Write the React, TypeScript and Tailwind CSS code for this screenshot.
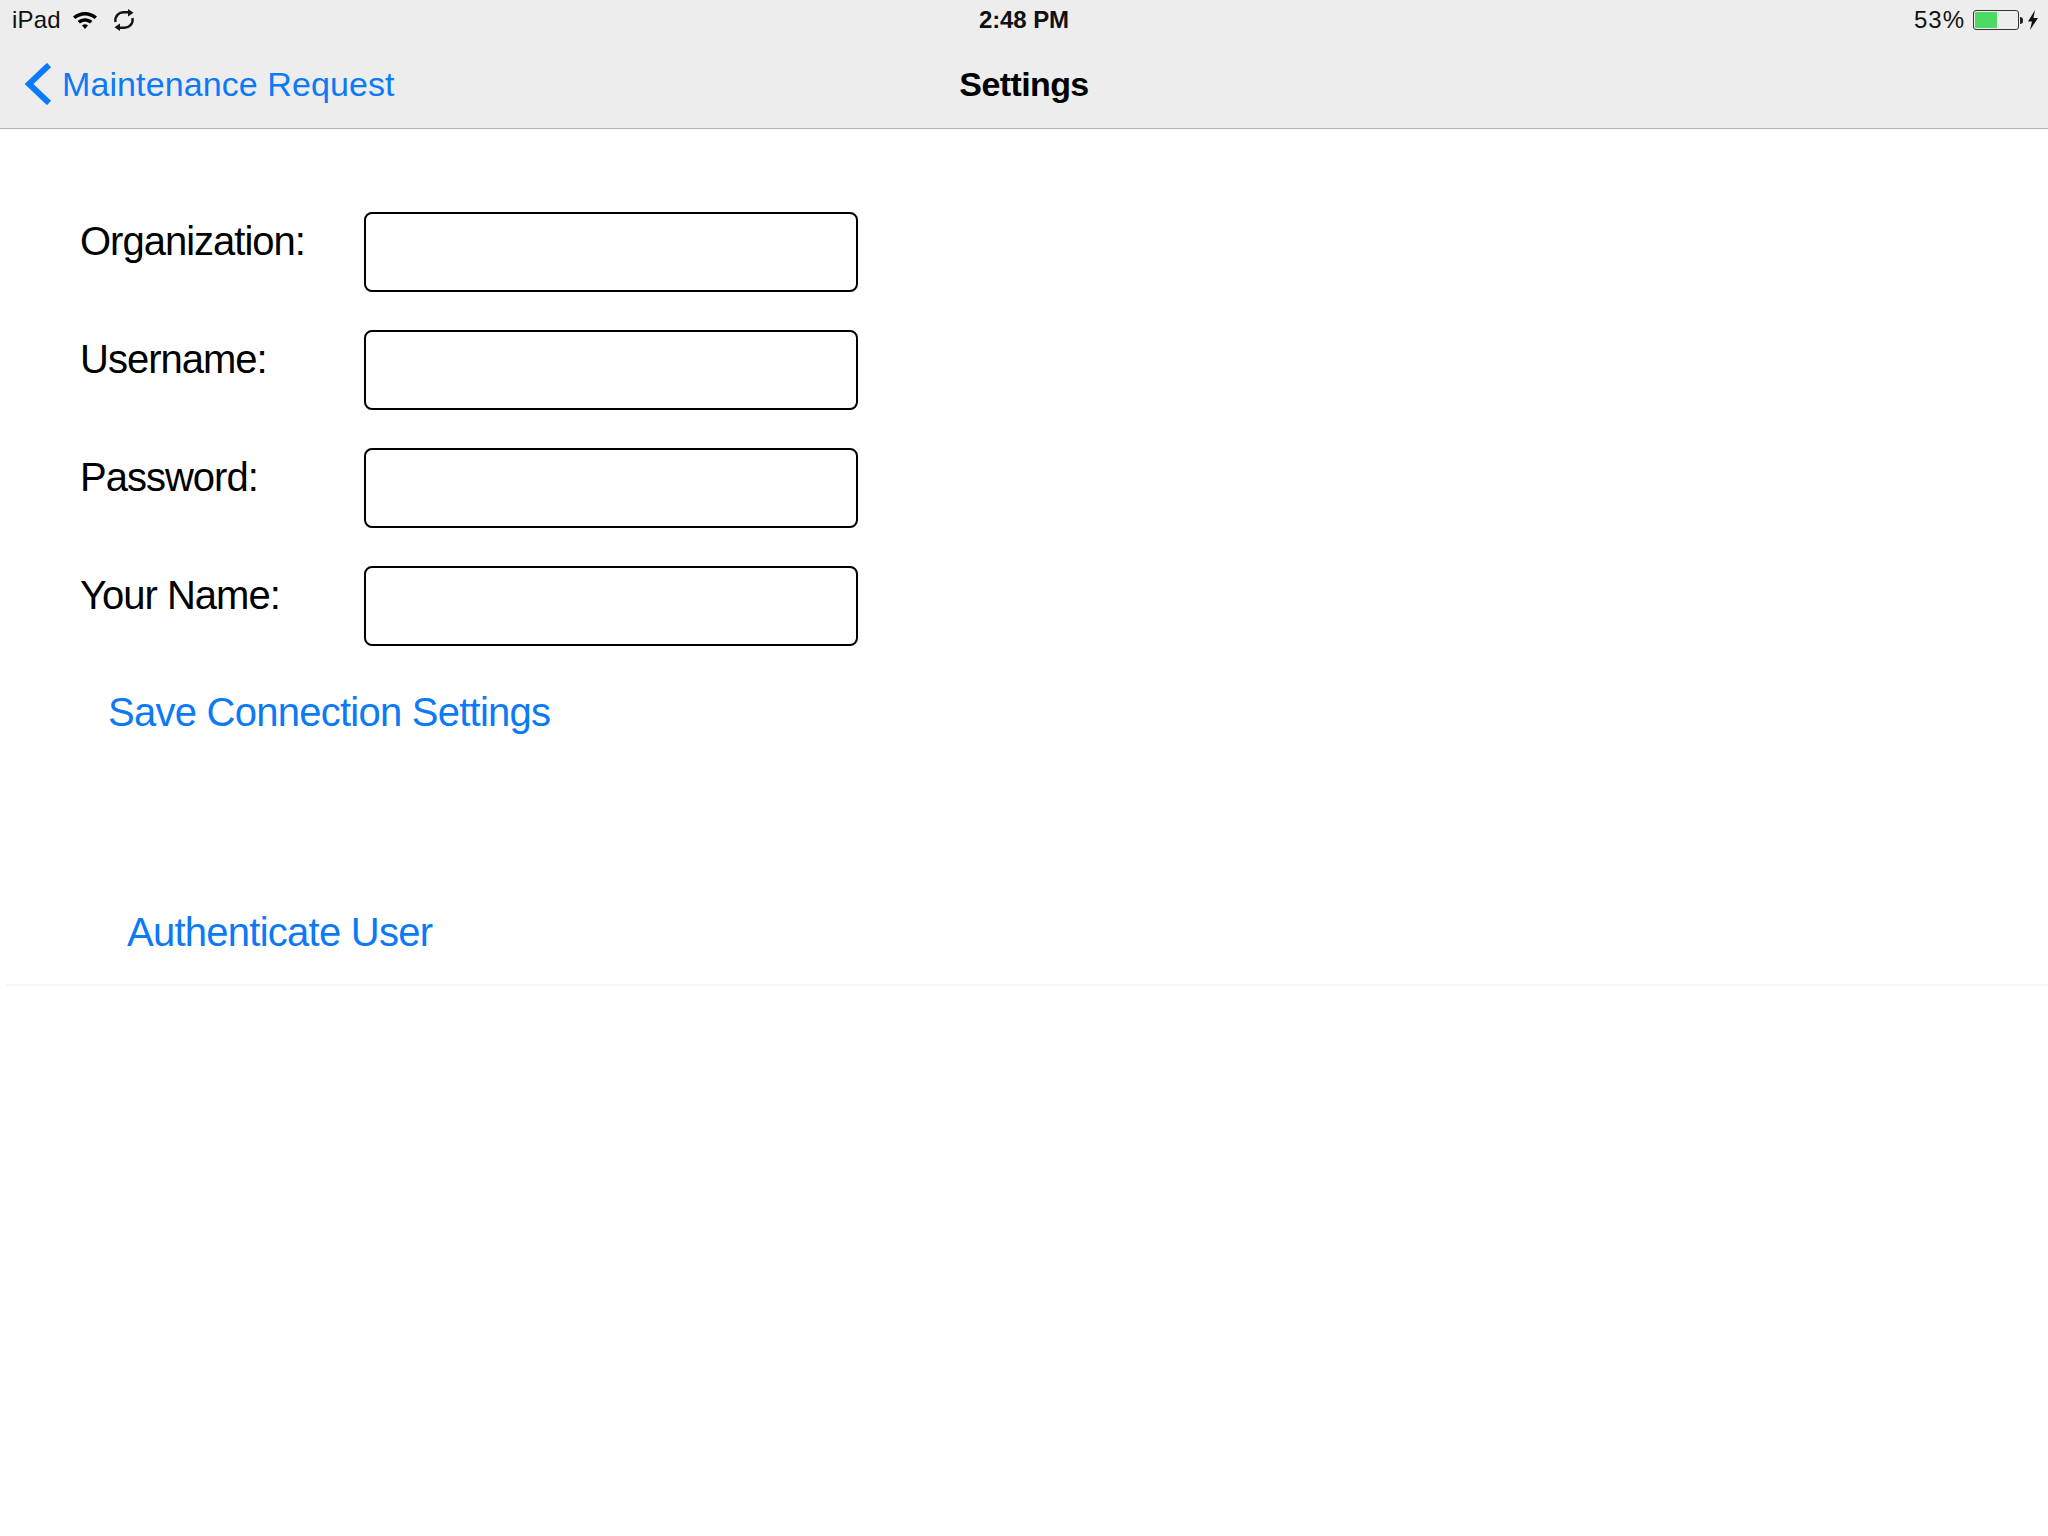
const FONT = "font-['Liberation_Sans',Arial,sans-serif]";

function Wifi() {
  return (
    <svg width="26" height="20" viewBox="0 0 26 20" className="ml-[11px]">
      <path d="M1 6.5C8 0.5 18 0.5 25 6.5L22.6 9C17 4.3 9 4.3 3.4 9Z" fill="#000" />
      <path d="M5.6 11C10 7.4 16 7.4 20.4 11L18 13.5C15 11 11 11 8 13.5Z" fill="#000" />
      <path d="M10 15.4C12 13.9 14 13.9 16 15.4L13 19Z" fill="#000" />
    </svg>
  );
}

function Sync() {
  return (
    <svg width="22" height="22" viewBox="0 0 22 22" fill="none" stroke="#111" strokeWidth="2.4" className="ml-[15px]">
      <path d="M2.5 13C1.5 7 6 3.2 10.5 3.2H15.5" />
      <path d="M15 0L20.5 3.8L15 7.4Z" fill="#111" stroke="none" />
      <path d="M19.5 9C20.5 15 16 18.8 11.5 18.8H6.5" />
      <path d="M7 22L1.5 18.2L7 14.6Z" fill="#111" stroke="none" />
    </svg>
  );
}

function Battery() {
  return (
    <div className="ml-[8px] flex items-center">
      <div className="flex h-[20px] w-[46px] items-stretch rounded-[3px] border border-[#333] p-px">
        <div className="w-[22px] rounded-[1px] bg-[#4cd964]" />
      </div>
      <div className="ml-px h-[7px] w-[3px] rounded-r-sm bg-[#222]" />
    </div>
  );
}

function Bolt() {
  return (
    <svg width="12" height="20" viewBox="0 0 12 20" className="ml-[4px]">
      <path d="M8 0L1 11.5H5L3 20L11 8H6.5Z" fill="#111" />
    </svg>
  );
}

function Field({ label }: { label: string }) {
  return (
    <div className="flex h-[80px] items-start">
      <div className="mt-[4px] w-[284px] text-[40px] leading-[50px] tracking-[-1px] text-black">{label}</div>
      <input aria-label={label} className="h-[80px] w-[494px] rounded-[8px] border-2 border-black bg-white outline-none" />
    </div>
  );
}

export default function App() {
  return (
    <div className={`${FONT} flex h-[1536px] w-[2048px] flex-col overflow-hidden bg-white`}>
      <header className="h-[129px] shrink-0 border-b border-[#b2b2b2] bg-[#ededed]">
        <div className="relative flex h-[40px] items-center pl-[12px] pr-[9px] text-[24px] text-[#111]">
          <span className="tracking-[0.2px]">iPad</span>
          <Wifi />
          <Sync />
          <span className="absolute left-0 right-0 text-center font-bold tracking-[-0.1px]">2:48 PM</span>
          <div className="ml-auto flex items-center">
            <span className="tracking-[1px]">53%</span>
            <Battery />
            <Bolt />
          </div>
        </div>
        <div className="relative flex h-[88px] items-center px-[24px]">
          <svg width="28" height="42" viewBox="0 0 28 42" fill="none" stroke="#0a7aff" strokeWidth="6">
            <path d="M25 2L5 21L25 40" />
          </svg>
          <span className="ml-[10px] text-[34px] tracking-[0.1px] text-[#0c7af5]">Maintenance Request</span>
          <span className="absolute left-0 right-0 text-center text-[34px] font-bold tracking-[-0.6px] text-black">Settings</span>
        </div>
      </header>
      <main className="flex flex-col">
        <div className="ml-[80px] mt-[83px] flex flex-col gap-[38px]">
          <Field label="Organization:" />
          <Field label="Username:" />
          <Field label="Password:" />
          <Field label="Your Name:" />
        </div>
        <button className="ml-[108px] mt-[41px] self-start text-[40px] leading-[50px] tracking-[-0.75px] text-[#0c7af5]">Save Connection Settings</button>
        <button className="ml-[127px] mt-[170px] self-start text-[40px] leading-[50px] tracking-[-0.75px] text-[#0c7af5]">Authenticate User</button>
        <div className="ml-[6px] mt-[27px] h-[2px] bg-[#f8f8f8]" />
      </main>
    </div>
  );
}
